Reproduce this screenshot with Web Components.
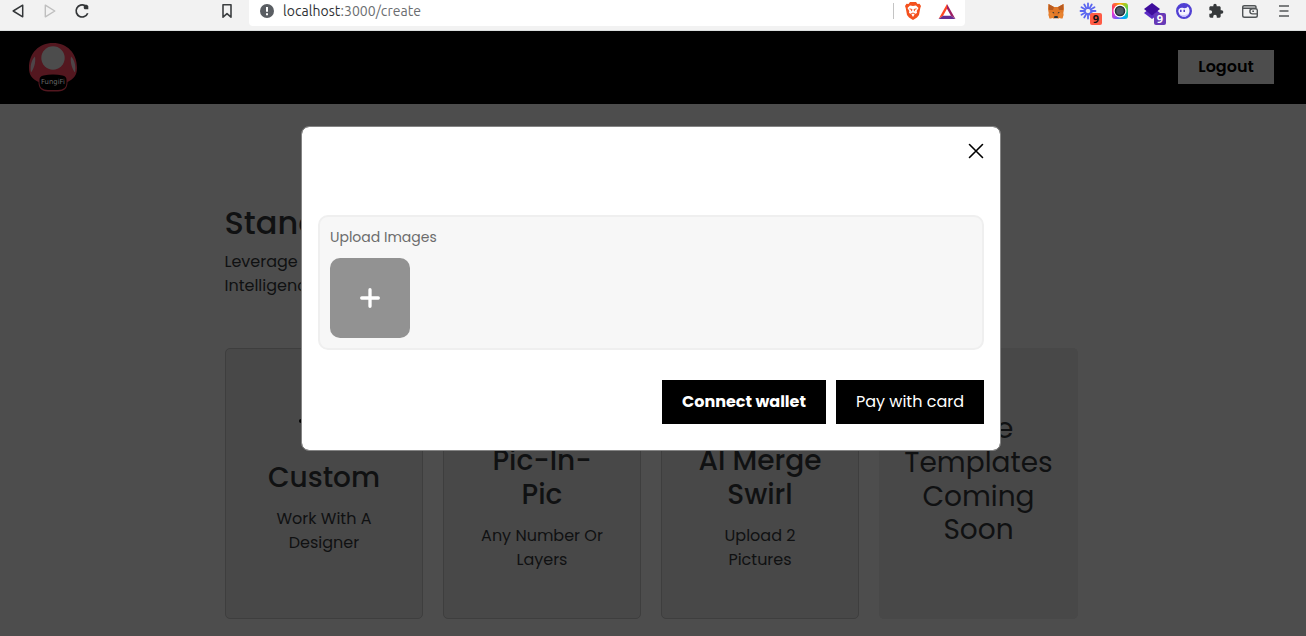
<!DOCTYPE html>
<html lang="en">
<head>
<meta charset="utf-8">
<title>FungiFi - Create</title>
<style>
html,body{margin:0;height:100%}
body{background:#4d4d4d;font-family:Poppins,Inter,sans-serif;font-size:16px;line-height:24px;color:#101112;overflow:hidden;height:636px;position:relative}
</style>
</head>
<body>
<browser-bar></browser-bar>
<site-header></site-header>
<template-page></template-page>
<upload-modal></upload-modal>
<script>
const define = (name, html, after) => customElements.define(name, class extends HTMLElement {
  constructor() {
    super();
    this.attachShadow({mode: 'open'}).innerHTML = html;
  }
  connectedCallback() { if (after) after(this); }
});

/* One unbroken line of text; an optional "w" attribute tracks it to that width. */
define('text-line', `<style>:host{display:block;white-space:nowrap}span{display:inline-block}</style><span><slot></slot></span>`, el => {
  if (!el.hasAttribute('w')) return;
  const span = el.shadowRoot.querySelector('span');
  const gap = (el.getAttribute('w') - span.getBoundingClientRect().width) / (el.textContent.length - 1);
  span.style.letterSpacing = gap + 'px';
  span.style.marginRight = -gap + 'px';
});

define('tool-icon', `<style>:host{display:flex;flex:none;width:32px;height:22px;align-items:center;justify-content:center;position:relative}::slotted(svg){display:block;overflow:visible}
b{position:absolute;left:18px;top:13px;width:12px;height:12px;border-radius:2px;font:bold 11px/12px "Noto Sans",sans-serif;text-align:center;background:var(--badge);color:var(--ink)}b:empty{display:none}</style><slot></slot><b></b>`,
  el => { el.shadowRoot.querySelector('b').textContent = el.getAttribute('badge') || ''; });

define('browser-bar', `<style>
:host{display:flex;box-sizing:border-box;height:31px;background:#f2f2f2;border-bottom:1px solid #dcdfdf;padding-left:2px;align-items:flex-start}
.mark{margin-left:113px}
.field{display:flex;box-sizing:border-box;width:716px;height:26px;margin-left:6px;background:#fff;border-radius:0 0 4px 4px;align-items:flex-start;padding:0 2px}
.url{font:14px/22px Ubuntu,"Noto Sans",sans-serif;color:#6b6d70}
.host{color:#303134}
.sep{width:1px;height:16px;margin:3px 3px 0 auto;background:#c4c4c4}
.ext{display:flex;margin-left:75px}
.wide{width:36px}
.rainbow{width:16px;height:16px;border-radius:3px;background:conic-gradient(#ffb000,#7bd335 15%,#13c3a0 30%,#00aaff 42%,#6d59f5 55%,#e837d5 70%,#ff4057 84%,#ffb000)}
</style>
<tool-icon><svg width="12" height="14" viewBox="0 0 12 14"><path d="M10.7 1.2v11.6L1.2 7z" fill="none" stroke="#333638" stroke-width="1.5" stroke-linejoin="round"/></svg></tool-icon>
<tool-icon><svg width="12" height="14" viewBox="0 0 12 14"><path d="M1.3 1.2v11.6L10.8 7z" fill="none" stroke="#bfbfbf" stroke-width="1.4" stroke-linejoin="round"/></svg></tool-icon>
<tool-icon><svg width="14" height="14" viewBox="0 0 14 14"><path d="M12.7 9.2A6 6 0 1 1 10.2 1.8" fill="none" stroke="#333638" stroke-width="1.7"/><path d="M9 1.3c2-1 4-.2 4.3 1v3H9.7C8.6 5.3 8.5 2.5 9 1.300z" fill="#333638"/></svg></tool-icon>
<tool-icon class="mark"><svg width="10" height="14" viewBox="0 0 10 14"><path d="M1 .8h8v12.400L5 9.700 1 13.200z" fill="none" stroke="#3c3f41" stroke-width="1.600" stroke-linejoin="round"/></svg></tool-icon>
<div class="field">
<tool-icon><svg width="14" height="14" viewBox="0 0 14 14"><circle cx="7" cy="7" r="7" fill="#5a5e63"/><path d="M7 3v4.700M7 9.300v2" stroke="#fff" stroke-width="2"/></svg></tool-icon>
<div class="url"><text-line w="138"><span class="host">localhost</span>:3000/create</text-line></div>
<div class="sep"></div>
<tool-icon><svg width="16" height="18" viewBox="0 0 16 18"><path d="M3.500 2 5 0h6l1.500 2 2-.2L16 4l-.7 2L14 13l-2 2.500L8 18l-4-2.500L2 13 .7 6 0 4l1.500-2.200z" fill="#f4511e"/><path d="M5 3.500 8 4l3-.5L13.500 6l-1.800 3 .3 2-2.200 1L8 15l-1.800-3L4 11l.3-2L2.500 6z" fill="#fff"/><path d="M4.500 6.800 7 7.500l-.6 1.700M11.500 6.800 9 7.500l.6 1.700M6 12l2-1 2 1" fill="none" stroke="#f4511e"/></svg></tool-icon>
<tool-icon style="margin-left:2px"><svg width="18" height="15" viewBox="0 0 18 16"><path d="M9 0v5L4.800 12.600 0 16z" fill="#ff4724"/><path d="M9 0v5l4.200 7.600L18 16z" fill="#9e1f63"/><path d="M0 16l4.800-3.400h8.400L18 16z" fill="#662d91"/></svg></tool-icon>
</div>
<div class="ext">
<tool-icon><svg width="16" height="15" viewBox="0 0 16 15"><path d="M.5 0 6 3h4l5.500-3L16 5l-.7 4 .3 2-1.200 3.500L11 14l-1 1H6l-1-1-3.400.5L.4 11l.3-2L0 5z" fill="#e17726"/><path d="M.5 0 6 3 5 6 1 6zM15.500 0 10 3l1 3h4z" fill="#b85b21"/><path d="M1 9l3-1 2 4-1 2-3.300.2zM15 9l-3-1-2 4 1 2 3.300.2z" fill="#e8832f"/><path d="M4 8l2 .3.200 1.500zM12 8l-2 .3-.2 1.500zM6.500 12h3l.5 2H6z" fill="#263238"/><path d="M5.500 14h5l-.8 1H6.300z" fill="#d5bfb2"/></svg></tool-icon>
<tool-icon badge="9" style="--badge:#ff5b45;--ink:#111"><svg width="18" height="18" viewBox="-9 -9 18 18"><g stroke="#5b66f0" stroke-width="1.800" stroke-linecap="round"><path d="M3 0h4.500M-3 0h-4.500M0 3v4.500M0-3v-4.500M2.600 1.500l3.900 2.250M-2.600 1.500l-3.900 2.250M2.600-1.500l3.900-2.250M-2.600-1.500l-3.900-2.250M1.500 2.600l2.250 3.900M-1.500 2.600l-2.250 3.900M1.500-2.600l2.250-3.900M-1.500-2.600l-2.250-3.900"/></g></svg></tool-icon>
<tool-icon><svg width="16" height="16" viewBox="0 0 16 16"><foreignObject width="16" height="16"><div class="rainbow"></div></foreignObject><circle cx="8" cy="8" r="6.500" fill="#fff"/><circle cx="8" cy="8" r="4.500" fill="#4d5965" stroke="#263139" stroke-width="1.600"/></svg></tool-icon>
<tool-icon badge="9" style="--badge:#673ab7;--ink:#fff"><svg width="16" height="16" viewBox="0 0 16 16"><path d="M8 3.500 16 10l-8 6-8-6z" fill="#5b2bc4"/><path d="M8 0l8 6-8 6.500L0 6z" fill="#3e0d9c"/></svg></tool-icon>
<tool-icon><svg width="16" height="16" viewBox="0 0 16 16"><circle cx="8" cy="8" r="7.200" fill="#5140d3" stroke="#5140d3" stroke-width="1.600"/><path d="M2.300 8.500C2.300 5 5 4.200 7.500 5 9.500 5.600 11 4.500 11.600 3.400c2 1.400 2.600 4.600 1.400 7C11 15 3.500 14.500 2.300 8.500z" fill="#f5f3ff"/><path d="M4.800 6.700v2.300M8.200 6.700v2.300" stroke="#4a38c6" stroke-width="1.500"/><path d="M2.800 10.500c3 2.300 7.500 2 10.300-.8-1.300 5-8 5.800-10.300.8z" fill="#cfc9ff"/></svg></tool-icon>
<tool-icon><svg width="16" height="16" viewBox="0 0 24 24"><path d="M20.500 11H19V7c0-1.100-.9-2-2-2h-4V3.500a2.500 2.500 0 0 0-5 0V5H4c-1.100 0-2 .9-2 2v3.800h1.500a2.700 2.700 0 0 1 0 5.400H2V20c0 1.100.9 2 2 2h3.800v-1.500a2.700 2.700 0 0 1 5.400 0V22H17c1.100 0 2-.9 2-2v-4h1.500a2.500 2.500 0 0 0 0-5z" fill="#36393b"/></svg></tool-icon>
<tool-icon class="wide"><svg width="16" height="13" viewBox="0 0 16 13"><path d="M14 3.500V2.300Q14 .7 12.500.7H2.300Q.7.700.7 2.300v8.200q0 1.800 1.800 1.800h11q1.800 0 1.800-1.800V5.300q0-1.600-1.800-1.600H10.500a2.600 2.600 0 0 0 0 5.200h4.600M.8 3.300h13M10.300 6.300h1.700" fill="none" stroke="#505456" stroke-width="1.400"/></svg></tool-icon>
<tool-icon><svg width="10" height="12" viewBox="0 0 10 12"><path d="M0 1h10M.5 6h9M0 11h10" stroke="#55585a" stroke-width="1.700"/></svg></tool-icon>
</div>`);

define('site-header', `<style>
:host{display:flex;box-sizing:border-box;height:73px;background:#000;align-items:center;justify-content:space-between;padding:0 32px 1px 28px}
svg{display:block;margin-top:-1px}
button{all:unset;box-sizing:border-box;width:96px;height:34px;background:#4d4d4d;color:#000;font-weight:600;font-size:16px;line-height:33px;display:flex;justify-content:center}
</style>
<svg width="50" height="50" viewBox="0 0 50 50"><path d="M10.500 40C4 37 1 33 1 26 1 11 11 1 25 1s24 10 24 25c0 7-3 11-9.500 14 0 6-3 9.500-9.500 9.500H20c-6.500 0-9.500-3.500-9.500-9.500z" fill="#53171f"/><circle cx="25" cy="16" r="11.700" fill="#4c4c4c"/><path d="M3 30.500c-1-6 0-12 4-16 1 6-1 12-4 16zM47 30.500c1-6 0-12-4-16-1 6 1 12 4 16z" fill="#4d4548"/><path d="M11.500 38q0-4 4-4.500 9.500-2 19 0 4 .5 4 4.500v3q0 7-8.500 7H20q-8.500 0-8.500-7z" fill="#000"/><text x="25" y="42.300" text-anchor="middle" textLength="24" lengthAdjust="spacingAndGlyphs" font-family="DejaVu Sans,sans-serif" font-size="7" fill="#666">FungiFi</text></svg>
<button><text-line>Logout</text-line></button>`);

define('template-card', `<style>
:host{display:flex;box-sizing:border-box;width:198px;height:271px;border:1px solid #3e3e3e;border-radius:5px;background:#484848;flex-direction:column;align-items:center;justify-content:center;padding-top:2px}
:host([soon]){width:199px;border-color:#484848;padding:0 0 8px}
.title{font-size:28px;line-height:33.600px;font-weight:500;display:flex;flex-direction:column;align-items:center}
:host([soon]) .title{font-weight:400}
.desc{display:flex;flex-direction:column;align-items:center;margin-top:12.400px}
:host([soon]) .desc{display:none}
.icon{height:47px;display:flex;align-items:flex-start}
.icon ::slotted(svg){margin-top:-1px}
:host([soon]) .icon{display:none}
</style><div class="icon"><slot name="icon"></slot></div><div class="title"><slot name="title"></slot></div><div class="desc"><slot></slot></div>`);

define('template-page', `<style>
:host{display:block;padding:100px 0 0 224.500px}
h1{margin:0 0 8px;font-size:32px;line-height:38.400px;font-weight:500}
.cards{display:flex;gap:20px;margin:49.600px 0 0 .5px}
svg{display:block}
</style>
<h1><text-line>Stand</text-line></h1>
<text-line>Leverage</text-line><text-line>Intelligence</text-line>
<div class="cards">
<template-card><svg slot="icon" width="50" height="40" viewBox="0 0 50 40"><path d="M2 8h46M25 8v26" fill="none" stroke="#000" stroke-width="4" stroke-linecap="round"/></svg>
<text-line slot="title">Custom</text-line><text-line>Work With A</text-line><text-line>Designer</text-line></template-card>
<template-card><svg slot="icon" width="40" height="40" viewBox="0 0 40 40"><path d="M3 4h34v26H3zM20 17h13v9H20z" fill="none" stroke="#000" stroke-width="3"/></svg>
<text-line slot="title">Pic-In-</text-line><text-line slot="title">Pic</text-line><text-line>Any Number Or</text-line><text-line>Layers</text-line></template-card>
<template-card><svg slot="icon" width="40" height="40" viewBox="0 0 40 40"><path d="M20 18c4-4 9 3 3 7-8 5-16-5-10-13C21 1 36 9 34 21" fill="none" stroke="#000" stroke-width="3"/></svg>
<text-line slot="title">AI Merge</text-line><text-line slot="title">Swirl</text-line><text-line>Upload 2</text-line><text-line>Pictures</text-line></template-card>
<template-card soon><text-line slot="title">More</text-line><text-line slot="title">Templates</text-line><text-line slot="title">Coming</text-line><text-line slot="title">Soon</text-line></template-card>
</div>`);

define('upload-modal', `<style>
:host{position:absolute;left:301px;top:126px;box-sizing:border-box;width:700px;height:325px;border:1px solid #848484;border-radius:8px;background:#fff;background-clip:padding-box;display:flex;flex-direction:column;padding:16px}
.close{all:unset;align-self:flex-end;width:16px;height:16px}
svg{display:block}
.box{box-sizing:border-box;height:135px;margin-top:56px;border:2px solid #efefef;border-radius:10px;background:#f7f7f7;padding:10px 10px 9px;display:flex;flex-direction:column}
.label{font-size:14px;line-height:21px;color:#6c6c6c}
.add{all:unset;width:80px;height:80px;margin-top:10px;border-radius:10px;background:#929292;display:flex;align-items:center;justify-content:center}
.actions{display:flex;justify-content:flex-end;gap:10px;margin-top:30px}
.actions button{all:unset;height:44px;width:164px;background:#000;color:#fff;line-height:43px;display:flex;justify-content:center}
.actions .bold{font-weight:700}.actions .card{width:148px}
</style>
<button class="close" aria-label="Close"><svg width="16" height="16" viewBox="0 0 16 16"><path d="M1.500 1.500l13 13M14.500 1.500l-13 13" stroke="#000" stroke-width="1.600" stroke-linecap="round"/></svg></button>
<div class="box"><div class="label"><text-line>Upload Images</text-line></div>
<button class="add" aria-label="Add image"><svg width="20" height="20" viewBox="0 0 20 20"><path d="M10 1.700v16.600M1.700 10h16.600" stroke="#fff" stroke-width="3.300" stroke-linecap="round"/></svg></button></div>
<div class="actions"><button class="bold"><text-line>Connect wallet</text-line></button><button class="card"><text-line>Pay with card</text-line></button></div>`);
</script>
</body>
</html>
